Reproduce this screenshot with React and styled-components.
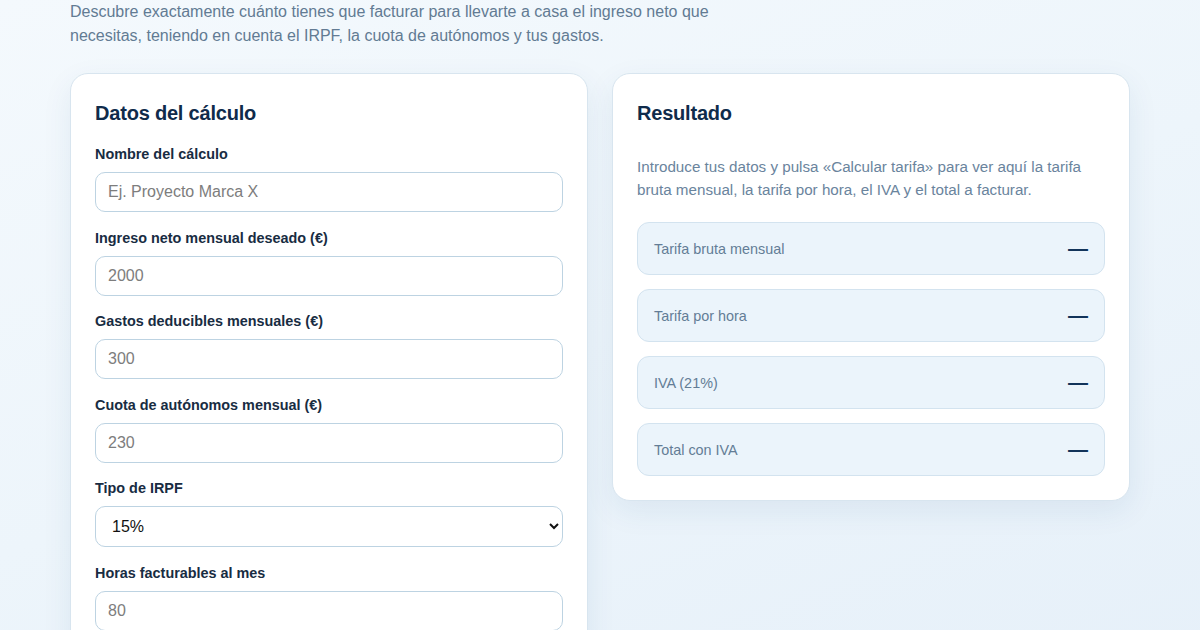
import styled, { createGlobalStyle } from "styled-components";

const GlobalStyle = createGlobalStyle`
  * { box-sizing: border-box; }
  html, body { margin: 0; padding: 0; }
  body {
    font-family: "Liberation Sans", Arial, sans-serif;
    background: linear-gradient(160deg, #f4f9fd 0%, #edf5fb 50%, #e6f0f9 100%);
    min-height: 100vh;
  }
`;

const fields = [
  { label: "Nombre del cálculo", placeholder: "Ej. Proyecto Marca X" },
  { label: "Ingreso neto mensual deseado (€)", placeholder: "2000" },
  { label: "Gastos deducibles mensuales (€)", placeholder: "300" },
  { label: "Cuota de autónomos mensual (€)", placeholder: "230" },
  { label: "Tipo de IRPF", select: ["7%", "15%", "19%"], value: "15%" },
  { label: "Horas facturables al mes", placeholder: "80" },
];

const results = ["Tarifa bruta mensual", "Tarifa por hora", "IVA (21%)", "Total con IVA"];

export default function App() {
  return (
    <>
      <GlobalStyle />
      <Page>
        <Intro>
          Descubre exactamente cuánto tienes que facturar para llevarte a casa el ingreso neto que
          necesitas, teniendo en cuenta el IRPF, la cuota de autónomos y tus gastos.
        </Intro>
        <Grid>
          <Card>
            <CardTitle>Datos del cálculo</CardTitle>
            {fields.map((f) => (
              <Field key={f.label}>
                <Label>{f.label}</Label>
                {f.select ? (
                  <Select defaultValue={f.value}>
                    {f.select.map((o) => (
                      <option key={o}>{o}</option>
                    ))}
                  </Select>
                ) : (
                  <Input placeholder={f.placeholder} />
                )}
              </Field>
            ))}
          </Card>
          <Card>
            <CardTitle>Resultado</CardTitle>
            <Hint>
              Introduce tus datos y pulsa «Calcular tarifa» para ver aquí la tarifa bruta mensual,
              la tarifa por hora, el IVA y el total a facturar.
            </Hint>
            <Rows>
              {results.map((r) => (
                <ResultRow key={r}>
                  <span>{r}</span>
                  <Dash>—</Dash>
                </ResultRow>
              ))}
            </Rows>
          </Card>
        </Grid>
      </Page>
    </>
  );
}

const Page = styled.div`
  width: 1060px;
  margin: 0 auto;
`;

const Intro = styled.p`
  margin: 0 0 25px;
  max-width: 680px;
  font-size: 16px;
  line-height: 24px;
  color: #627b93;
`;

const Grid = styled.div`
  display: grid;
  grid-template-columns: 1fr 1fr;
  gap: 24px;
  align-items: start;
`;

const Card = styled.section`
  background: #fff;
  border: 1px solid #d8e5ef;
  border-radius: 18px;
  padding: 24px;
  box-shadow: 0 10px 30px rgba(30, 80, 130, 0.08);
`;

const CardTitle = styled.h2`
  margin: 0 0 17px;
  font-size: 20px;
  line-height: 30px;
  font-weight: 700;
  color: #0f2b4b;
  letter-spacing: -0.2px;
`;

const Field = styled.div`
  margin-bottom: 16.6px;
`;

const Label = styled.label`
  display: block;
  font-size: 14.4px;
  line-height: 18px;
  font-weight: 700;
  color: #182c42;
  margin-bottom: 9px;
`;

const Input = styled.input`
  display: block;
  width: 100%;
  height: 40px;
  padding: 0 12px;
  border: 1px solid #bdd3e2;
  border-radius: 10px;
  font-family: inherit;
  font-size: 16px;
  color: #1b2b3c;
  background: #fff;
  &::placeholder { color: #7d7d7d; }
`;

const Select = styled.select`
  display: block;
  width: 100%;
  height: 41px;
  padding: 0 12px;
  border: 1px solid #bdd3e2;
  border-radius: 10px;
  font-family: inherit;
  font-size: 16px;
  color: #111;
  background: #fff;
`;

const Hint = styled.p`
  margin: 26.5px 0 21.5px;
  font-size: 15.2px;
  line-height: 23px;
  color: #6a849d;
`;

const Rows = styled.div`
  display: flex;
  flex-direction: column;
  gap: 14px;
`;

const ResultRow = styled.div`
  display: flex;
  align-items: center;
  justify-content: space-between;
  height: 53px;
  padding: 0 16px;
  background: #ebf4fb;
  border: 1px solid #d3e3ef;
  border-radius: 12px;
  font-size: 14.4px;
  color: #637d96;
`;

const Dash = styled.span`
  font-size: 20px;
  font-weight: 700;
  color: #12345a;
`;
